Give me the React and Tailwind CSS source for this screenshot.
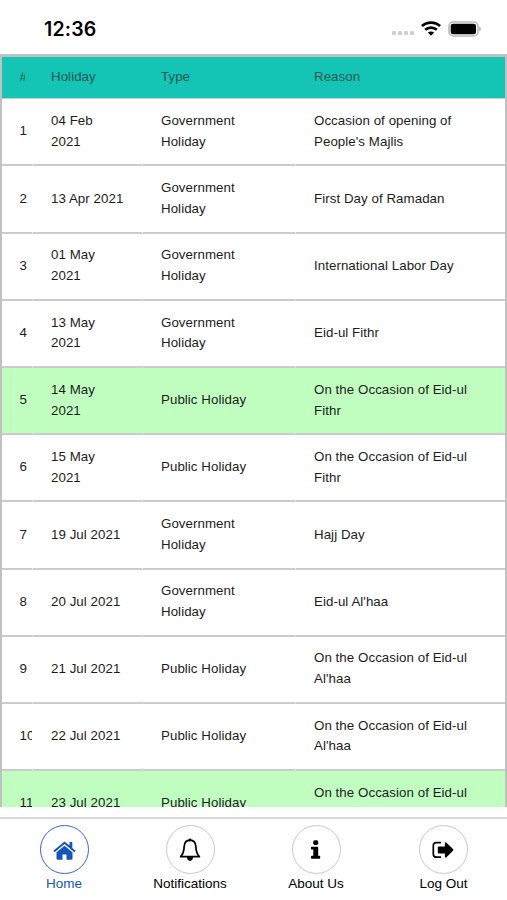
import React from "react";

const holidays = [
  ["1", "04 Feb\n2021", "Government Holiday", "Occasion of opening of People's Majlis"],
  ["2", "13 Apr 2021", "Government Holiday", "First Day of Ramadan"],
  ["3", "01 May\n2021", "Government Holiday", "International Labor Day"],
  ["4", "13 May\n2021", "Government Holiday", "Eid-ul Fithr"],
  ["5", "14 May\n2021", "Public Holiday", "On the Occasion of Eid-ul Fithr", true],
  ["6", "15 May\n2021", "Public Holiday", "On the Occasion of Eid-ul Fithr"],
  ["7", "19 Jul 2021", "Government Holiday", "Hajj Day"],
  ["8", "20 Jul 2021", "Government Holiday", "Eid-ul Al'haa"],
  ["9", "21 Jul 2021", "Public Holiday", "On the Occasion of Eid-ul Al'haa"],
  ["10", "22 Jul 2021", "Public Holiday", "On the Occasion of Eid-ul Al'haa"],
  ["11", "23 Jul 2021", "Public Holiday", "On the Occasion of Eid-ul Al'haa", true],
];

function StatusBar() {
  return (
    <header className="flex h-[54px] shrink-0 items-center pt-[3px] pr-[26px] pl-[44px]">
      <span className="mr-auto pt-px font-[Inter,sans-serif] text-[19.5px] leading-6 font-semibold tracking-[0.2px] text-black">12:36</span>
      <div className="mt-[8px] mr-[7px] flex gap-[2px]">
        {[0, 1, 2, 3].map((i) => (
          <i key={i} className="size-[4px] rounded-[1px] bg-[#cfcfcf]" />
        ))}
      </div>
      <svg className="mr-[7px] h-[15px] w-[20px]" viewBox="0 0 20 15" fill="none" stroke="#000" strokeWidth="2.7">
        <path d="M.9 5.1C6 .4 14 .4 19.1 5.1M4.2 8.8c3.3-3 8.3-3 11.6 0" />
        <path d="M6.9 11.6c1.8-1.6 4.4-1.6 6.2 0L10 14.7z" fill="#000" stroke="none" />
      </svg>
      <svg className="h-[16px] w-[33px]" viewBox="0 0 33 16">
        <rect x="1" y="1" width="29" height="14" rx="4.2" fill="#fff" stroke="#b9b9b9" strokeWidth="1.6" />
        <rect x="2.7" y="2.7" width="25.3" height="10.6" rx="2.2" />
        <path d="M31.4 5.7c1.7.7 1.7 3.9 0 4.6z" fill="#999" />
      </svg>
    </header>
  );
}

function Row({ cells, highlighted }) {
  return (
    <div className={"grid h-[67.2px] shrink-0 grid-cols-[31px_110px_153px_1fr] " + (highlighted ? "bg-[#c1ffc1]" : "bg-white")}>
      {cells.map((text, i) => (
        <div
          key={i}
          className={
            "flex items-center border-b-2 border-[#cbcbcb] whitespace-pre-line " +
            (i === 0 ? "overflow-hidden pl-[17.5px]" : i === 3 ? "pr-[34px] pl-[18px]" : i === 2 ? "pr-[30px] pl-[18px]" : "pr-[10px] pl-[18px]") +
            (i < 3 ? " border-r border-r-transparent" : "")
          }
        >
          {text}
        </div>
      ))}
    </div>
  );
}

const icons = {
  home: (
    <svg className="mt-[2px] h-[19px] w-[23px]" viewBox="0 0 23 19" fill="currentColor">
      <path d="M11.5.4.3 9.7l1.3 1.5 9.9-8.2 9.9 8.2 1.3-1.5-3.4-2.8V1.1h-2.8v3.5z" />
      <path d="m11.5 4.7-8 6.6v6.2c0 .8.5 1.2 1.2 1.2h4.8v-5.2h4v5.2h4.8c.7 0 1.2-.4 1.2-1.2v-6.2z" />
    </svg>
  ),
  bell: (
    <svg className="mt-px h-[24px] w-[22px]" viewBox="0 0 22 24">
      <path d="M11 2.2C7.5 2.3 5.4 4.8 5.2 8.4 5 13.1 4.3 16 1.6 18.7h18.8c-2.7-2.7-3.4-5.6-3.6-10.3C16.6 4.8 14.5 2.3 11 2.2z" fill="none" stroke="currentColor" strokeWidth="1.7" strokeLinejoin="round" />
      <circle cx="11" cy="1.9" r="1.4" />
      <path d="M7.9 19h6.2c0 2.2-1.2 3.9-3.1 3.9S7.9 21.2 7.9 19z" fill="currentColor" />
    </svg>
  ),
  info: (
    <svg className="h-[19px] w-[10px]" viewBox="0 0 10 19" fill="currentColor">
      <rect x="2.2" y=".3" width="5" height="4.6" rx="1.6" />
      <path d="M.7 6.7h6.5v9h1.3c.4 0 .7.2.7.6v1.8c0 .4-.3.6-.7.6H.7c-.4 0-.7-.2-.7-.6v-1.8c0-.4.3-.6.7-.6h1.6V9.6H.7c-.4 0-.7-.2-.7-.6V7.3c0-.4.3-.6.7-.6z" />
    </svg>
  ),
  logout: (
    <svg className="mr-[2px] h-[18px] w-[22px]" viewBox="0 0 22 18">
      <path d="M9 1.6H4.6C2.5 1.6 1.3 2.8 1.3 4.9v8c0 2.1 1.2 3.3 3.3 3.3H9" fill="none" stroke="currentColor" strokeWidth="1.7" />
      <path d="M6.6 5.4h6.3V2c0-.8.8-1.1 1.3-.6l6.8 6.7c.5.5.5 1.1 0 1.6l-6.8 6.7c-.5.5-1.3.2-1.3-.6v-3.4H6.6c-.5 0-.8-.3-.8-.8V6.2c0-.5.3-.8.8-.8z" fill="currentColor" />
    </svg>
  ),
};

function NavItem({ icon, label, active }) {
  return (
    <button className={"flex flex-col items-center " + (active ? "text-[#1554bd]" : "text-black")}>
      <span className={"flex size-[49px] items-center justify-center rounded-full border " + (active ? "border-[#3167be]" : "border-[#c8c8c8]")}>
        {icons[icon]}
      </span>
      <span className="pt-px text-[13.5px] leading-[18px] whitespace-nowrap">{label}</span>
    </button>
  );
}

export default function App() {
  return (
    <div className="flex h-[900px] w-[507px] flex-col overflow-hidden bg-white font-['Liberation_Sans',Arial,sans-serif] text-[13.3px] leading-[20.8px] tracking-[0.06px] text-[#1c1c1c]">
      <StatusBar />
      <main className="flex h-[753px] shrink-0 flex-col overflow-hidden border-t-3 border-r-2 border-l-2 border-[#c1c1c1]">
        <div className="grid h-[42.2px] shrink-0 grid-cols-[31px_110px_153px_1fr] items-center border-b border-[#c5cfcd] bg-[#14c4b5] text-[#1d5854]">
          <div className="pl-[17.5px]">
            <span className="block w-[5px] overflow-hidden">#</span>
          </div>
          <div className="pl-[18px]">Holiday</div>
          <div className="pl-[18px]">Type</div>
          <div className="pl-[18px]">Reason</div>
        </div>
        {holidays.map(([no, date, type, reason, highlighted]) => (
          <Row key={no} cells={[no, date, type, reason]} highlighted={highlighted} />
        ))}
      </main>
      <nav className="mt-[10px] grid flex-1 grid-cols-[128px_124px_128px_127px] items-start border-t-2 border-[#dadada] pt-[6px] tracking-normal">
        <NavItem icon="home" label="Home" active />
        <NavItem icon="bell" label="Notifications" />
        <NavItem icon="info" label="About Us" />
        <NavItem icon="logout" label="Log Out" />
      </nav>
    </div>
  );
}
